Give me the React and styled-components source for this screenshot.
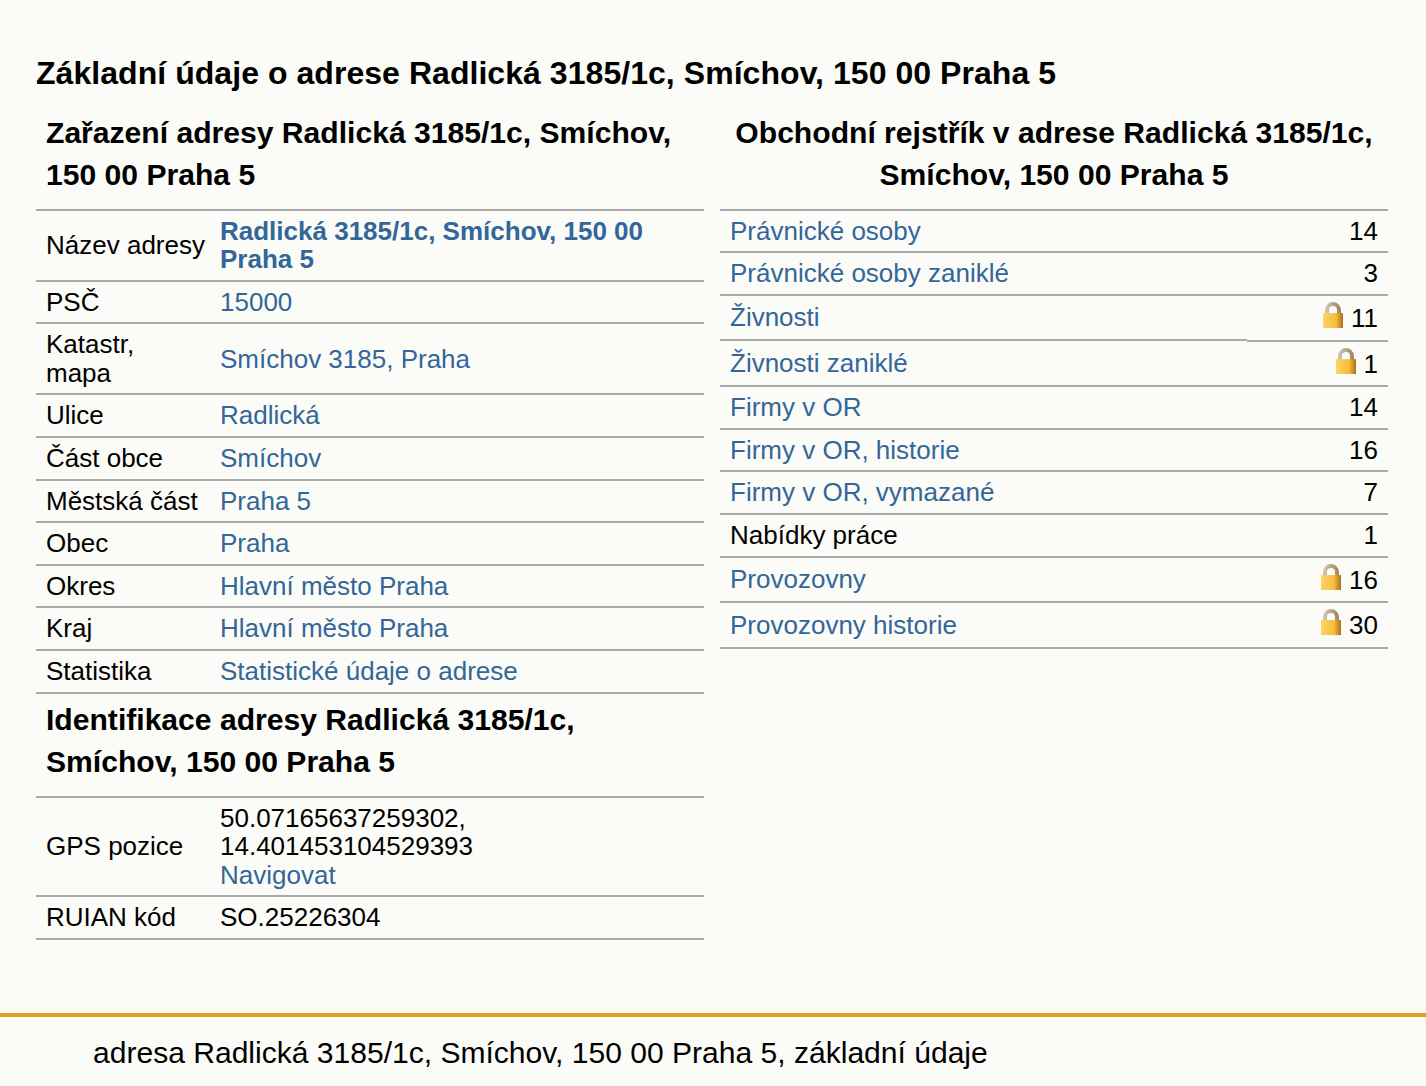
import styled, { createGlobalStyle } from 'styled-components';

const GlobalStyle = createGlobalStyle`
  html, body {
    margin: 0;
    padding: 0;
    background: #fbfbf7;
    color: #000;
    font-family: "Liberation Sans", Arial, sans-serif;
  }
`;

const Main = styled.main`
  padding: 52px 38px 0 36px;
  height: 1013px;
  box-sizing: border-box;
`;

const Title = styled.h1`
  margin: 0 0 18px;
  font-size: 32px;
  line-height: 42px;
  font-weight: bold;
  letter-spacing: 0.05px;
`;

const Columns = styled.div`
  display: grid;
  grid-template-columns: 668px 668px;
  column-gap: 16px;
`;

const Heading = styled.h2`
  margin: 0;
  padding: 0 10px 12.6px;
  font-size: 30.1px;
  line-height: 42px;
  font-weight: bold;
  text-align: ${(p) => (p.$center ? 'center' : 'left')};
`;

const Table = styled.table`
  width: 100%;
  border-collapse: collapse;
  border-top: 2px solid #aaa;
  margin-bottom: 5.4px;
  font-size: 26px;
  line-height: 28.58px;
`;

const Row = styled.tr`
  border-bottom: 2px solid #aaa;
`;

const Label = styled.td`
  width: 159px;
  padding: 6px 5px 6px 10px;
  vertical-align: middle;
`;

const Value = styled.td`
  padding: 6px 10px;
  vertical-align: middle;
`;

/* the name cell of one row sits a pixel higher than its count cell */
const NudgedValue = styled(Value)`
  position: relative;
  box-shadow: inset 0 -1px 0 #aaa;

  &::after {
    content: '';
    position: absolute;
    left: 0;
    right: 0;
    bottom: -2px;
    height: 1px;
    background: #fbfbf7;
  }
`;

const Count = styled.td`
  width: 121px;
  padding: ${(p) => (p.$locked ? '5px 10px 7px' : '6px 10px')};
  text-align: right;
  white-space: nowrap;
  vertical-align: middle;
`;

const Link = styled.a`
  color: #336699;
  text-decoration: none;
  font-weight: ${(p) => (p.$bold ? 'bold' : 'normal')};
`;

const Lock = styled.svg`
  width: 20px;
  height: 26.2px;
  margin-right: 8px;
  vertical-align: baseline;
  transform: translateY(1px);
`;

const Footer = styled.footer`
  border-top: 4px solid #daa520;
  padding: 16px 93px 0;
  height: 73px;
  box-sizing: border-box;
  font-size: 30.06px;
  line-height: 40px;
`;

const LockIcon = () => (
  <Lock viewBox="0 0 20 26">
    <defs>
      <linearGradient id="lockBody" x1="0" y1="0" x2="1" y2="0">
        <stop offset="0" stopColor="#fcd468" />
        <stop offset="0.65" stopColor="#f7bd38" />
        <stop offset="1" stopColor="#a86f22" />
      </linearGradient>
      <linearGradient id="lockShackle" x1="0" y1="0" x2="1" y2="0">
        <stop offset="0" stopColor="#c9c2b8" />
        <stop offset="1" stopColor="#a58a62" />
      </linearGradient>
    </defs>
    <path d="M4 12V8a6 6 0 0 1 12 0v4" fill="none" stroke="url(#lockShackle)" strokeWidth="4" />
    <rect x="0" y="11" width="20" height="15" fill="url(#lockBody)" />
  </Lock>
);

const addressRows = [
  ['Název adresy', 'Radlická 3185/1c, Smíchov, 150 00 Praha 5', true],
  ['PSČ', '15000'],
  ['Katastr, mapa', 'Smíchov 3185, Praha'],
  ['Ulice', 'Radlická'],
  ['Část obce', 'Smíchov'],
  ['Městská část', 'Praha 5'],
  ['Obec', 'Praha'],
  ['Okres', 'Hlavní město Praha'],
  ['Kraj', 'Hlavní město Praha'],
  ['Statistika', 'Statistické údaje o adrese'],
];

const registerRows = [
  ['Právnické osoby', 14],
  ['Právnické osoby zaniklé', 3],
  ['Živnosti', 11, true],
  ['Živnosti zaniklé', 1, true],
  ['Firmy v OR', 14],
  ['Firmy v OR, historie', 16],
  ['Firmy v OR, vymazané', 7],
  ['Nabídky práce', 1, false, true],
  ['Provozovny', 16, true],
  ['Provozovny historie', 30, true],
];

export default function App() {
  return (
    <>
      <GlobalStyle />
      <Main>
        <Title>Základní údaje o adrese Radlická 3185/1c, Smíchov, 150 00 Praha 5</Title>
        <Columns>
          <section>
            <Heading>Zařazení adresy Radlická 3185/1c, Smíchov, 150 00 Praha 5</Heading>
            <Table>
              <tbody>
                {addressRows.map(([label, value, bold]) => (
                  <Row key={label}>
                    <Label>{label}</Label>
                    <Value><Link href="#" $bold={bold}>{value}</Link></Value>
                  </Row>
                ))}
              </tbody>
            </Table>
            <Heading>Identifikace adresy Radlická 3185/1c, Smíchov, 150 00 Praha 5</Heading>
            <Table>
              <tbody>
                <Row>
                  <Label>GPS pozice</Label>
                  <Value>
                    50.07165637259302, 14.401453104529393<br />
                    <Link href="#">Navigovat</Link>
                  </Value>
                </Row>
                <Row>
                  <Label>RUIAN kód</Label>
                  <Value>SO.25226304</Value>
                </Row>
              </tbody>
            </Table>
          </section>
          <section>
            <Heading $center>Obchodní rejstřík v adrese Radlická 3185/1c, Smíchov, 150 00 Praha 5</Heading>
            <Table>
              <tbody>
                {registerRows.map(([name, count, locked, plain]) => {
                  const Name = name === 'Živnosti' ? NudgedValue : Value;
                  return (
                    <Row key={name}>
                      <Name>{plain ? name : <Link href="#">{name}</Link>}</Name>
                      <Count $locked={locked}>{locked && <LockIcon />}{count}</Count>
                    </Row>
                  );
                })}
              </tbody>
            </Table>
          </section>
        </Columns>
      </Main>
      <Footer>adresa Radlická 3185/1c, Smíchov, 150 00 Praha 5, základní údaje</Footer>
    </>
  );
}
